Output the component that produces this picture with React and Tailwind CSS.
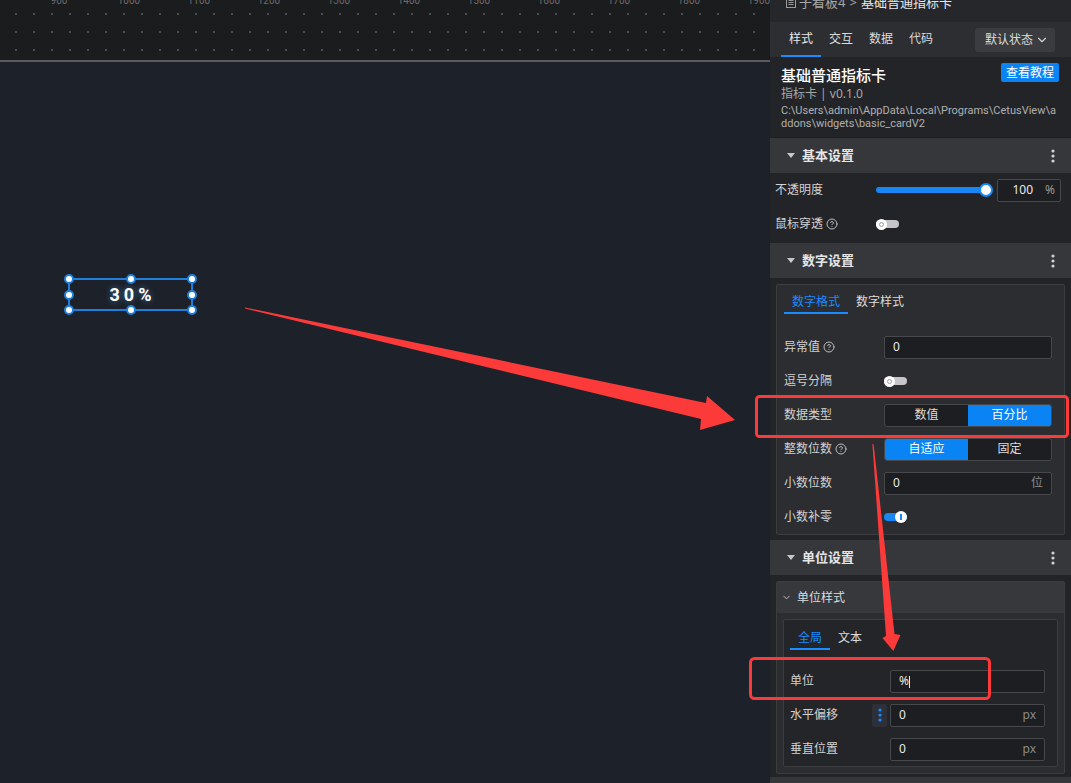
import React from 'react';
import { ChevronDown } from 'lucide-react';

const font = "font-['Noto_Sans','Noto_Sans_CJK_SC',sans-serif]";

const Help = () => (
  <svg width="12" height="12" viewBox="0 0 24 24" fill="none" stroke="#bdbdbd" strokeWidth="2" strokeLinecap="round">
    <circle cx="12" cy="12" r="10" />
    <path d="M9.09 9a3 3 0 0 1 5.83 1c0 2-3 3-3 3" />
    <path d="M12 17h.01" />
  </svg>
);

const Kebab = ({ color = '#d0d0d0' }) => (
  <svg width="4" height="14" viewBox="0 0 4 14">
    <circle cx="2" cy="2" r="1.6" fill={color} />
    <circle cx="2" cy="7" r="1.6" fill={color} />
    <circle cx="2" cy="12" r="1.6" fill={color} />
  </svg>
);

const SectionHeader = ({ title }) => (
  <div className="h-[35px] shrink-0 bg-[#36373b] flex items-center pl-[17px] pr-[16px]">
    <svg width="8" height="5" viewBox="0 0 8 5" className="mr-[7px]">
      <polygon points="0,0 8,0 4,5" fill="#c8c8c8" />
    </svg>
    <span className="text-[13px] font-bold text-[#e6e6e6] flex-1">{title}</span>
    <Kebab />
  </div>
);

const ToggleOff = () => (
  <div className="relative w-[23px] h-[11px] flex items-center">
    <div className="w-full h-[8px] rounded-full bg-[#c6c6ca]" />
    <div className="absolute left-0 top-0 w-[11px] h-[11px] rounded-full bg-white flex items-center justify-center">
      <div className="w-[5px] h-[5px] rounded-full border border-[#a0a0a0]" />
    </div>
  </div>
);

const ToggleOn = () => (
  <div className="relative w-[23px] h-[12px] flex items-center">
    <div className="w-full h-[8px] rounded-full bg-[#1687f5]" />
    <div className="absolute right-0 top-0 w-[12px] h-[12px] rounded-full bg-white flex items-center justify-center">
      <div className="w-[2px] h-[6px] bg-[#1687f5]" />
    </div>
  </div>
);

const Input = ({ value, suffix, cursor }) => (
  <div className="flex-1 h-[23px] bg-[#1d1e21] border border-[#47484c] rounded-[2px] flex items-center px-[8px]">
    <span className="text-[12px] text-[#e8e8e8] flex-1">
      {value}
      {cursor && <span className="inline-block w-[1px] h-[12px] bg-[#e8e8e8] align-middle" />}
    </span>
    {suffix && <span className="text-[12px] text-[#8a8a8a]">{suffix}</span>}
  </div>
);

const Segmented = ({ options, active }) => (
  <div className="flex-1 h-[23px] flex rounded-[3px] border border-[#47484c] bg-[#1d1e21] overflow-hidden">
    {options.map((o, i) => (
      <div
        key={o}
        className={`flex-1 flex items-center justify-center text-[12px] ${i === active ? 'bg-[#0a84f5] text-white' : 'text-[#dcdcdc]'}`}
      >
        {o}
      </div>
    ))}
  </div>
);

const Row = ({ label, help, labelW = 'w-[100px]', extra, children }) => (
  <div className="h-[34px] flex items-center">
    <div className={`${labelW} shrink-0 flex items-center text-[12px] text-[#d2d2d2]`}>
      <span>{label}</span>
      {help && <span className="ml-[3px] flex"><Help /></span>}
      {extra}
    </div>
    <div className="flex-1 flex items-center">{children}</div>
  </div>
);

const Tabs = ({ items }) => (
  <div className="flex">
    {items.map((t, i) => (
      <div
        key={t}
        className={`h-[23px] px-[8px] flex items-center text-[12px] border-b-2 ${i === 0 ? 'text-[#1a8cff] border-[#1a8cff]' : 'text-[#dcdcdc] border-transparent'}`}
      >
        {t}
      </div>
    ))}
  </div>
);

const rulerLabels = ['900', '1000', '1100', '1200', '1300', '1400', '1500', '1600', '1700', '1800', '1900'];

const Handle = ({ className }) => (
  <div className={`absolute w-[10px] h-[10px] rounded-full bg-white border-2 border-[#1f7fdc] ${className}`} />
);

const Canvas = () => (
  <div className="w-[770px] shrink-0 flex flex-col">
    <div className="h-[62px] shrink-0 bg-[#1b1c1e] border-b-2 border-[#5a5a5c] bg-[radial-gradient(circle,#4b4c4f_1px,transparent_1.2px)] bg-[size:18px_18px] bg-[position:7px_5px] overflow-hidden">
      <div className="flex pl-[24px] -mt-[5px]">
        {rulerLabels.map((l) => (
          <div key={l} className="w-[70px] shrink-0 text-center text-[10px] leading-[12px] text-[#6b6b6b] font-['Roboto',sans-serif]">
            {l}
          </div>
        ))}
      </div>
    </div>
    <div className="flex-1 bg-[#1c212a] relative">
      <div className="absolute left-[68px] top-[216px] w-[125px] h-[33px] border-2 border-[#1f7fdc] flex items-center justify-center">
        <span className="text-[18px] font-bold text-white tracking-[4px] pl-[4px] font-['Roboto',sans-serif] [text-shadow:0_0_6px_rgba(110,190,255,0.55)]">
          30%
        </span>
        <Handle className="-left-[6px] -top-[6px]" />
        <Handle className="left-1/2 -translate-x-1/2 -top-[6px]" />
        <Handle className="-right-[6px] -top-[6px]" />
        <Handle className="-left-[6px] top-1/2 -translate-y-1/2" />
        <Handle className="-right-[6px] top-1/2 -translate-y-1/2" />
        <Handle className="-left-[6px] -bottom-[6px]" />
        <Handle className="left-1/2 -translate-x-1/2 -bottom-[6px]" />
        <Handle className="-right-[6px] -bottom-[6px]" />
      </div>
    </div>
  </div>
);

const Panel = () => (
  <div className="w-[301px] shrink-0 flex flex-col bg-[#232428] overflow-hidden">
    {/* breadcrumb */}
    <div className="h-[22px] shrink-0 bg-[#26272b] flex items-start pl-[16px]">
      <div className="flex items-center -mt-[5px] text-[13px] leading-[14px]">
        <svg width="10" height="11" viewBox="0 0 10 11" className="mr-[3px]">
          <rect x="0.5" y="0.5" width="9" height="10" fill="none" stroke="#9a9a9a" />
          <path d="M2.5 3.5h5M2.5 5.5h5M2.5 7.5h5" stroke="#9a9a9a" />
        </svg>
        <span className="text-[#a8a8a8]">子看板4</span>
        <span className="text-[#a8a8a8] mx-[4px]">&gt;</span>
        <span className="text-[#e8e8e8]">基础普通指标卡</span>
      </div>
    </div>

    {/* tabs */}
    <div className="h-[35px] shrink-0 bg-[#2d2e32] flex items-end pl-[11px] pr-[16px]">
      <div className="flex">
        {['样式', '交互', '数据', '代码'].map((t, i) => (
          <div
            key={t}
            className={`w-[40px] h-[35px] flex items-center justify-center text-[12px] border-b-2 ${i === 0 ? 'text-[#e8e8e8] border-[#1a8cff]' : 'text-[#dcdcdc] border-transparent'}`}
          >
            {t}
          </div>
        ))}
      </div>
      <div className="flex-1" />
      <div className="h-[24px] w-[80px] mb-[5px] bg-[#3b3c40] rounded-[3px] flex items-center justify-between pl-[10px] pr-[6px] text-[12px] text-[#dcdcdc]">
        <span>默认状态</span>
        <ChevronDown size={14} strokeWidth={2} color="#d0d0d0" />
      </div>
    </div>

    {/* info */}
    <div className="h-[81px] shrink-0 pl-[11px] pr-[12px] pt-[6px] border-b border-[#1d1e21]">
      <div className="flex items-start justify-between">
        <span className="text-[15px] leading-[22px] font-medium text-white mt-[1px]">基础普通指标卡</span>
        <div className="h-[19px] px-[5px] bg-[#0a84f5] rounded-[2px] flex items-center text-[12px] text-white">查看教程</div>
      </div>
      <div className="text-[12px] leading-[14px] text-[#a8a8a8] mt-[1px]">指标卡 | v0.1.0</div>
      <div className="text-[11px] leading-[13px] text-[#b0b0b0] mt-[3px] whitespace-nowrap font-['Roboto',sans-serif]">
        <div>C:\Users\admin\AppData\Local\Programs\CetusView\a</div>
        <div>ddons\widgets\basic_cardV2</div>
      </div>
    </div>

    {/* 基本设置 */}
    <SectionHeader title="基本设置" />
    <div className="h-[70px] shrink-0 pl-[5px] pr-[10px]">
      <Row label="不透明度" labelW="w-[101px]">
        <div className="flex-1 relative h-[14px] flex items-center mr-[10px]">
          <div className="w-full h-[6px] rounded-full bg-[#1687f5]" />
          <div className="absolute -right-[6px] top-0 w-[14px] h-[14px] rounded-full bg-white border-2 border-[#1687f5]" />
        </div>
        <div className="w-[64px] h-[23px] bg-[#1d1e21] border border-[#47484c] rounded-[2px] flex items-center justify-end pr-[5px] text-[12px]">
          <span className="text-[#e8e8e8] mr-[12px]">100</span>
          <span className="text-[#9a9a9a]">%</span>
        </div>
      </Row>
      <Row label="鼠标穿透" help labelW="w-[101px]">
        <ToggleOff />
      </Row>
    </div>

    {/* 数字设置 */}
    <SectionHeader title="数字设置" />
    <div className="shrink-0 px-[6px] pt-[6px] pb-[5px]">
      <div className="bg-[#2c2d31] border border-[#3c3d41] rounded-[2px] pl-[7px] pr-[12px]">
        <div className="mt-[6px]">
          <Tabs items={['数字格式', '数字样式']} />
        </div>
        <div className="mt-[16px]">
          <Row label="异常值" help>
            <Input value="0" />
          </Row>
          <Row label="逗号分隔">
            <ToggleOff />
          </Row>
          <Row label="数据类型">
            <Segmented options={['数值', '百分比']} active={1} />
          </Row>
          <Row label="整数位数" help>
            <Segmented options={['自适应', '固定']} active={0} />
          </Row>
          <Row label="小数位数">
            <Input value="0" suffix="位" />
          </Row>
          <Row label="小数补零">
            <ToggleOn />
          </Row>
        </div>
      </div>
    </div>

    {/* 单位设置 */}
    <SectionHeader title="单位设置" />
    <div className="shrink-0 px-[6px] pt-[6px] pb-[3px]">
      <div className="bg-[#2c2d31] border border-[#3c3d41] rounded-[2px] pb-[6px]">
        <div className="h-[31px] bg-[#37383c] flex items-center pl-[4px] text-[12px] text-[#dcdcdc]">
          <ChevronDown size={11} strokeWidth={2} color="#c8c8c8" className="mr-[5px]" />
          <span>单位样式</span>
        </div>
        <div className="mx-[6px] mt-[6px] bg-[#242528] border border-[#3c3d41] rounded-[2px] pl-[6px] pr-[12px]">
          <div className="mt-[7px]">
            <Tabs items={['全局', '文本']} />
          </div>
          <div className="mt-[14px]">
            <Row label="单位">
              <Input value="%" cursor />
            </Row>
            <Row
              label="水平偏移"
              extra={
                <span className="ml-auto mr-[3px] w-[15px] h-[23px] rounded-[2px] bg-[#2d3038] flex items-center justify-center">
                  <Kebab color="#1a8cff" />
                </span>
              }
            >
              <Input value="0" suffix="px" />
            </Row>
            <Row label="垂直位置">
              <Input value="0" suffix="px" />
            </Row>
          </div>
        </div>
      </div>
    </div>
    <SectionHeader title="" />
  </div>
);

const Annotations = () => (
  <svg className="absolute inset-0 pointer-events-none" width="1071" height="783" viewBox="0 0 1071 783">
    <polygon points="245,307.4 706,403 707,396 735,420 700,430 701,419 245,308.6" fill="#fc3a3a" />
    <polygon points="872.4,444 886,636 882.5,638 893.3,651 900.5,635 894.5,634 873.6,444" fill="#fc3a3a" />
    <rect x="756.5" y="396.5" width="311" height="40" rx="3" fill="none" stroke="#fc3a3a" strokeWidth="3" />
    <rect x="750.5" y="658.5" width="239" height="40" rx="4" fill="none" stroke="#fc3a3a" strokeWidth="3" />
  </svg>
);

const App = () => (
  <div className={`relative w-[1071px] h-[783px] flex overflow-hidden ${font}`}>
    <Canvas />
    <Panel />
    <Annotations />
  </div>
);

export default App;
